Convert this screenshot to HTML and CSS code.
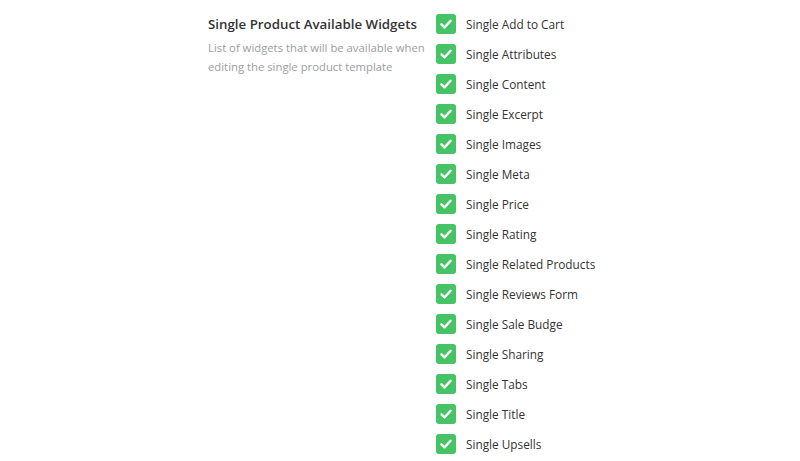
FILE: index.html
```html
<!DOCTYPE html>
<html>
<head>
<meta charset="utf-8">
<link rel="stylesheet" href="styles.css">
</head>
<body>
<div class="setting">
  <div class="label-col">
    <h3 class="title">Single Product Available Widgets</h3>
    <p class="desc">List of widgets that will be available when editing the single product template</p>
  </div>
  <ul class="checks">
    <li class="item"><span class="box"><svg viewBox="0 0 20 20" width="20" height="20"><path d="M5.5 10.3 L8.6 13.3 L14.6 6.8" fill="none" stroke="#fff" stroke-width="2.4" stroke-linecap="round" stroke-linejoin="round"/></svg></span><span class="name">Single Add to Cart</span></li>
    <li class="item"><span class="box"><svg viewBox="0 0 20 20" width="20" height="20"><path d="M5.5 10.3 L8.6 13.3 L14.6 6.8" fill="none" stroke="#fff" stroke-width="2.4" stroke-linecap="round" stroke-linejoin="round"/></svg></span><span class="name">Single Attributes</span></li>
    <li class="item"><span class="box"><svg viewBox="0 0 20 20" width="20" height="20"><path d="M5.5 10.3 L8.6 13.3 L14.6 6.8" fill="none" stroke="#fff" stroke-width="2.4" stroke-linecap="round" stroke-linejoin="round"/></svg></span><span class="name">Single Content</span></li>
    <li class="item"><span class="box"><svg viewBox="0 0 20 20" width="20" height="20"><path d="M5.5 10.3 L8.6 13.3 L14.6 6.8" fill="none" stroke="#fff" stroke-width="2.4" stroke-linecap="round" stroke-linejoin="round"/></svg></span><span class="name">Single Excerpt</span></li>
    <li class="item"><span class="box"><svg viewBox="0 0 20 20" width="20" height="20"><path d="M5.5 10.3 L8.6 13.3 L14.6 6.8" fill="none" stroke="#fff" stroke-width="2.4" stroke-linecap="round" stroke-linejoin="round"/></svg></span><span class="name">Single Images</span></li>
    <li class="item"><span class="box"><svg viewBox="0 0 20 20" width="20" height="20"><path d="M5.5 10.3 L8.6 13.3 L14.6 6.8" fill="none" stroke="#fff" stroke-width="2.4" stroke-linecap="round" stroke-linejoin="round"/></svg></span><span class="name">Single Meta</span></li>
    <li class="item"><span class="box"><svg viewBox="0 0 20 20" width="20" height="20"><path d="M5.5 10.3 L8.6 13.3 L14.6 6.8" fill="none" stroke="#fff" stroke-width="2.4" stroke-linecap="round" stroke-linejoin="round"/></svg></span><span class="name">Single Price</span></li>
    <li class="item"><span class="box"><svg viewBox="0 0 20 20" width="20" height="20"><path d="M5.5 10.3 L8.6 13.3 L14.6 6.8" fill="none" stroke="#fff" stroke-width="2.4" stroke-linecap="round" stroke-linejoin="round"/></svg></span><span class="name">Single Rating</span></li>
    <li class="item"><span class="box"><svg viewBox="0 0 20 20" width="20" height="20"><path d="M5.5 10.3 L8.6 13.3 L14.6 6.8" fill="none" stroke="#fff" stroke-width="2.4" stroke-linecap="round" stroke-linejoin="round"/></svg></span><span class="name">Single Related Products</span></li>
    <li class="item"><span class="box"><svg viewBox="0 0 20 20" width="20" height="20"><path d="M5.5 10.3 L8.6 13.3 L14.6 6.8" fill="none" stroke="#fff" stroke-width="2.4" stroke-linecap="round" stroke-linejoin="round"/></svg></span><span class="name">Single Reviews Form</span></li>
    <li class="item"><span class="box"><svg viewBox="0 0 20 20" width="20" height="20"><path d="M5.5 10.3 L8.6 13.3 L14.6 6.8" fill="none" stroke="#fff" stroke-width="2.4" stroke-linecap="round" stroke-linejoin="round"/></svg></span><span class="name">Single Sale Budge</span></li>
    <li class="item"><span class="box"><svg viewBox="0 0 20 20" width="20" height="20"><path d="M5.5 10.3 L8.6 13.3 L14.6 6.8" fill="none" stroke="#fff" stroke-width="2.4" stroke-linecap="round" stroke-linejoin="round"/></svg></span><span class="name">Single Sharing</span></li>
    <li class="item"><span class="box"><svg viewBox="0 0 20 20" width="20" height="20"><path d="M5.5 10.3 L8.6 13.3 L14.6 6.8" fill="none" stroke="#fff" stroke-width="2.4" stroke-linecap="round" stroke-linejoin="round"/></svg></span><span class="name">Single Tabs</span></li>
    <li class="item"><span class="box"><svg viewBox="0 0 20 20" width="20" height="20"><path d="M5.5 10.3 L8.6 13.3 L14.6 6.8" fill="none" stroke="#fff" stroke-width="2.4" stroke-linecap="round" stroke-linejoin="round"/></svg></span><span class="name">Single Title</span></li>
    <li class="item"><span class="box"><svg viewBox="0 0 20 20" width="20" height="20"><path d="M5.5 10.3 L8.6 13.3 L14.6 6.8" fill="none" stroke="#fff" stroke-width="2.4" stroke-linecap="round" stroke-linejoin="round"/></svg></span><span class="name">Single Upsells</span></li>
  </ul>
</div>
</body>
</html>
```
FILE: styles.css
```css
html, body {
  margin: 0;
  padding: 0;
  background: #fff;
}
body {
  font-family: "Open Sans", "Noto Sans", sans-serif;
  overflow: hidden;
}
.setting {
  display: flex;
  padding: 14px 0 0 208px;
}
.label-col {
  width: 228px;
  flex: none;
}
.title {
  margin: 0;
  font-size: 13.3px;
  font-weight: 600;
  color: #333;
  line-height: 20px;
}
.desc {
  margin: 4px 0 0;
  font-size: 11.3px;
  color: #9a9da2;
  line-height: 19px;
  width: 222px;
}
.checks {
  list-style: none;
  margin: 0;
  padding: 0;
  display: flex;
  flex-direction: column;
  gap: 10px;
}
.item {
  display: flex;
  align-items: center;
  height: 20px;
}
.box {
  width: 20px;
  height: 20px;
  border-radius: 3px;
  background: #46c365;
  display: flex;
  flex: none;
}
.name {
  margin-left: 10px;
  font-size: 11.8px;
  color: #333;
}
```
